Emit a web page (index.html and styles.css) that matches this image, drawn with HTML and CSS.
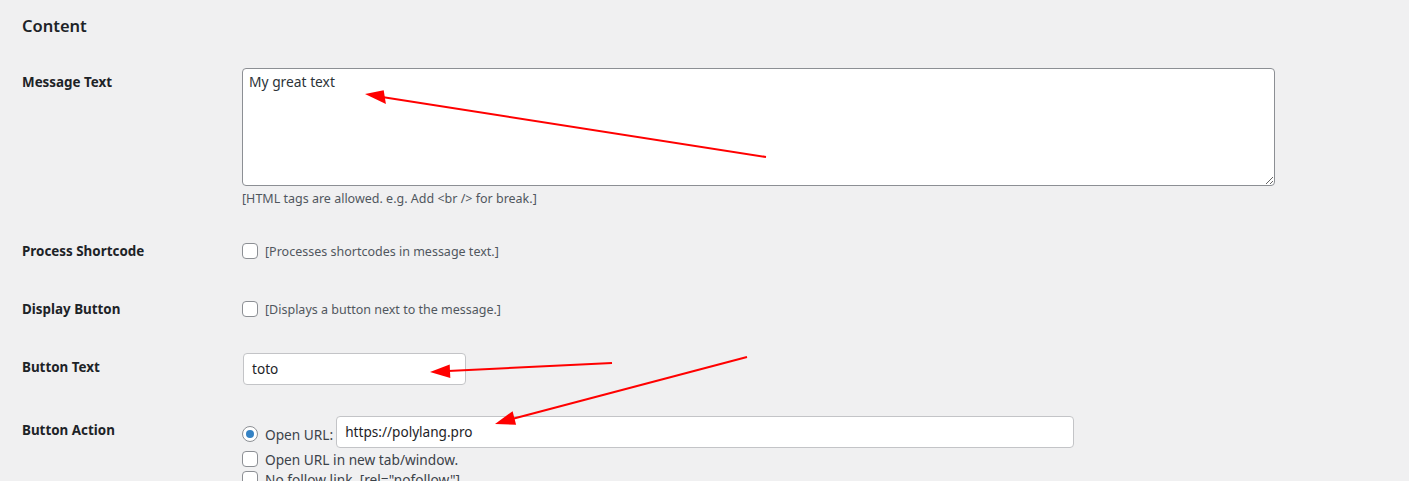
FILE: index.html
```html
<!DOCTYPE html>
<html lang="en">
<head>
<meta charset="utf-8">
<title>Content settings</title>
<link rel="stylesheet" href="styles.css">
</head>
<body>
<div class="wrap">
  <h2 class="section-title">Content</h2>
  <div class="form-table">
    <div class="row">
      <div class="th">Message Text</div>
      <div class="td">
        <textarea class="message" rows="6">My great text</textarea>
        <p class="description">[HTML tags are allowed. e.g. Add &lt;br /&gt; for break.]</p>
      </div>
    </div>
    <div class="row">
      <div class="th">Process Shortcode</div>
      <div class="td">
        <label class="check-line"><span class="checkbox"></span><span class="hint">[Processes shortcodes in message text.]</span></label>
      </div>
    </div>
    <div class="row">
      <div class="th">Display Button</div>
      <div class="td">
        <label class="check-line"><span class="checkbox"></span><span class="hint">[Displays a button next to the message.]</span></label>
      </div>
    </div>
    <div class="row">
      <div class="th">Button Text</div>
      <div class="td">
        <div class="text-input small">toto</div>
      </div>
    </div>
    <div class="row">
      <div class="th">Button Action</div>
      <div class="td">
        <div class="url-line">
          <span class="radio checked"></span>
          <span class="opt">Open URL:</span>
          <div class="text-input wide">https://polylang.pro</div>
        </div>
        <label class="opt-line"><span class="checkbox"></span><span class="opt">Open URL in new tab/window.</span></label>
        <label class="opt-line"><span class="checkbox"></span><span class="opt">No follow link. [rel="nofollow"]</span></label>
      </div>
    </div>
  </div>
</div>
<svg class="arrows" width="1409" height="481" viewBox="0 0 1409 481">
  <line x1="766" y1="157" x2="382" y2="97" />
  <polygon points="365,94 383.7,90.2 385.9,104" />
  <line x1="612" y1="363" x2="448" y2="371" />
  <polygon points="430,372 449.7,364.5 450.3,378" />
  <line x1="747" y1="357" x2="512" y2="419" />
  <polygon points="495,424 512.6,411.2 516.1,424.8" />
</svg>
</body>
</html>
```
FILE: styles.css
```css
html, body {
  margin: 0;
  padding: 0;
  background: #f0f0f1;
  overflow: hidden;
}
body {
  width: 1409px;
  height: 481px;
  position: relative;
  font-family: "Noto Sans", "Open Sans", sans-serif;
  font-size: 13px;
  color: #1d2327;
}
.wrap {
  padding: 0 22px;
}
.section-title {
  margin: 0;
  padding-top: 15px;
  font-size: 16.5px;
  line-height: 22px;
  font-weight: 600;
  color: #1d2327;
}
.form-table {
  margin-top: 16px;
}
.row {
  display: grid;
  grid-template-columns: 220px 1fr;
}
.th {
  padding: 20px 0;
  font-size: 13.4px;
  font-weight: 700;
  line-height: 18px;
  color: #1d2327;
}
.td {
  padding: 15px 0;
}
.message {
  display: block;
  box-sizing: border-box;
  width: 1033px;
  height: 118px;
  margin: 0;
  padding: 4px 6px;
  border: 1px solid #8c8f94;
  border-radius: 4px;
  font-family: inherit;
  font-size: 13.8px;
  line-height: 18px;
  color: #2c3338;
  resize: vertical;
  background: #fff;
}
.description {
  margin: 5px 0 0;
  font-size: 12.5px;
  line-height: 16px;
  color: #50575e;
}
.check-line,
.opt-line,
.url-line {
  display: flex;
  align-items: center;
}
.check-line {
  height: 28px;
}
.checkbox,
.radio {
  flex: none;
  box-sizing: border-box;
  width: 16px;
  height: 16px;
  border: 1px solid #8c8f94;
  background: #fff;
  margin-right: 7px;
}
.checkbox {
  border-radius: 4px;
}
.radio {
  border-radius: 50%;
  display: flex;
  align-items: center;
  justify-content: center;
  margin-top: 4px;
}
.radio.checked::before {
  content: "";
  width: 8px;
  height: 8px;
  border-radius: 50%;
  background: #3582c4;
}
.hint {
  font-size: 12.5px;
  color: #50575e;
}
.opt {
  font-size: 13.7px;
  color: #3c434a;
}
.url-line .opt {
  margin-top: 4px;
  margin-right: 3px;
}
.text-input {
  box-sizing: border-box;
  height: 32px;
  padding: 0 8px;
  border: 1px solid #c3c4c7;
  border-radius: 4px;
  background: #fff;
  font-size: 13.6px;
  line-height: 30px;
  color: #1d2327;
}
.text-input.small {
  width: 223px;
  margin-left: 1px;
  margin-bottom: 1px;
}
.text-input.wide {
  width: 738px;
}
.opt-line {
  height: 20px;
  margin-top: 0;
}
.url-line + .opt-line {
  margin-top: 1px;
}
.arrows {
  position: absolute;
  left: 0;
  top: 0;
  pointer-events: none;
}
.arrows line {
  stroke: #ff0000;
  stroke-width: 2;
}
.arrows polygon {
  fill: #ff0000;
}
```
